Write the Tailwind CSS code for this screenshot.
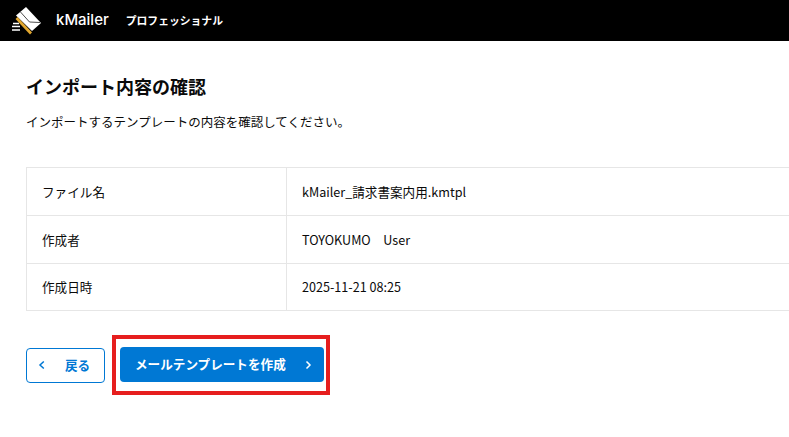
<!DOCTYPE html>
<html lang="ja">
<head>
    <meta charset="UTF-8">
    <title>インポート内容の確認</title>
    <script src="https://cdn.jsdelivr.net/npm/@tailwindcss/browser@4"></script>
</head>
<body class="bg-white h-[437px] w-[789px] overflow-hidden font-['Noto_Sans_CJK_JP','Noto_Sans',sans-serif] text-[#0a0a0a]">
    <header class="bg-black h-[41px] flex items-center pl-[8px]">
        <svg width="36" height="32" viewBox="8 4 36 32" class="shrink-0">
            <path d="M26 6 L41 22 L32 30 L16 14.500 Z" fill="#fff"/>
            <path d="M20.500 11 L29.500 21 L40 21.500" fill="none" stroke="#000" stroke-width="0.700"/>
            <path d="M14.500 17 L30.500 34" stroke="#000" stroke-width="4.500"/>
            <path d="M16.500 17 L31 32.500" stroke="#e2a72e" stroke-width="2.800"/>
            <path d="M13 22.500h6M12 25.500h8M12 29h8" stroke="#fff" stroke-width="1.400"/>
        </svg>
        <span class="ml-[12px] text-[15px] font-medium text-white font-['Inter',sans-serif]">kMailer</span>
        <span class="ml-[17px] text-[10.8px] font-bold text-white">プロフェッショナル</span>
    </header>

    <main class="pl-[26px] pt-[33px]">
        <h1 class="text-[18px] font-bold leading-[24px]">インポート内容の確認</h1>
        <p class="mt-[14px] text-[12.5px] leading-[20px]">インポートするテンプレートの内容を確認してください。</p>

        <div class="mt-[35px] border border-[#e6e6e6] border-r-0 text-[12.6px]">
            <div class="flex h-[48px] items-center border-b border-[#e6e6e6]">
                <div class="w-[260px] h-full flex items-center pl-[15px] pt-[2px] border-r border-[#e6e6e6]">ファイル名</div>
                <div class="pl-[15px] pt-[2px]">kMailer_請求書案内用.kmtpl</div>
            </div>
            <div class="flex h-[48px] items-center border-b border-[#e6e6e6]">
                <div class="w-[260px] h-full flex items-center pl-[15px] pt-[2px] border-r border-[#e6e6e6]">作成者</div>
                <div class="pl-[15px] pt-[2px]">TOYOKUMO　User</div>
            </div>
            <div class="flex h-[46px] items-center">
                <div class="w-[260px] h-full flex items-center pl-[15px] border-r border-[#e6e6e6]">作成日時</div>
                <div class="pl-[15px]">2025-11-21 08:25</div>
            </div>
        </div>

        <div class="mt-[24px] flex items-center">
            <button class="w-[79px] h-[35px] flex items-center border border-[#0078d4] rounded-[4px] bg-white text-[#0078d4] text-[12.6px] font-bold pl-[11px]">
                <svg width="8" height="10" viewBox="0 0 8 10"><path d="M5.800 1.500 L2 5 L5.800 8.500" fill="none" stroke="#0078d4" stroke-width="1.500"/></svg>
                <span class="ml-[19px]">戻る</span>
            </button>
            <div class="ml-[7px] border-[4px] border-[#e61e1e] pl-[4px] pr-[2px] pt-[8px] pb-[9px] flex">
                <button class="w-[204px] h-[35px] flex items-center rounded-[4px] bg-[#0078d4] text-white text-[12.6px] font-bold pl-[15px]">
                    <span>メールテンプレートを作成</span>
                    <svg width="8" height="10" viewBox="0 0 8 10" class="ml-[18px]"><path d="M2.500 1.500 L6 5 L2.500 8.500" fill="none" stroke="#fff" stroke-width="1.500"/></svg>
                </button>
            </div>
        </div>
    </main>
</body>
</html>
